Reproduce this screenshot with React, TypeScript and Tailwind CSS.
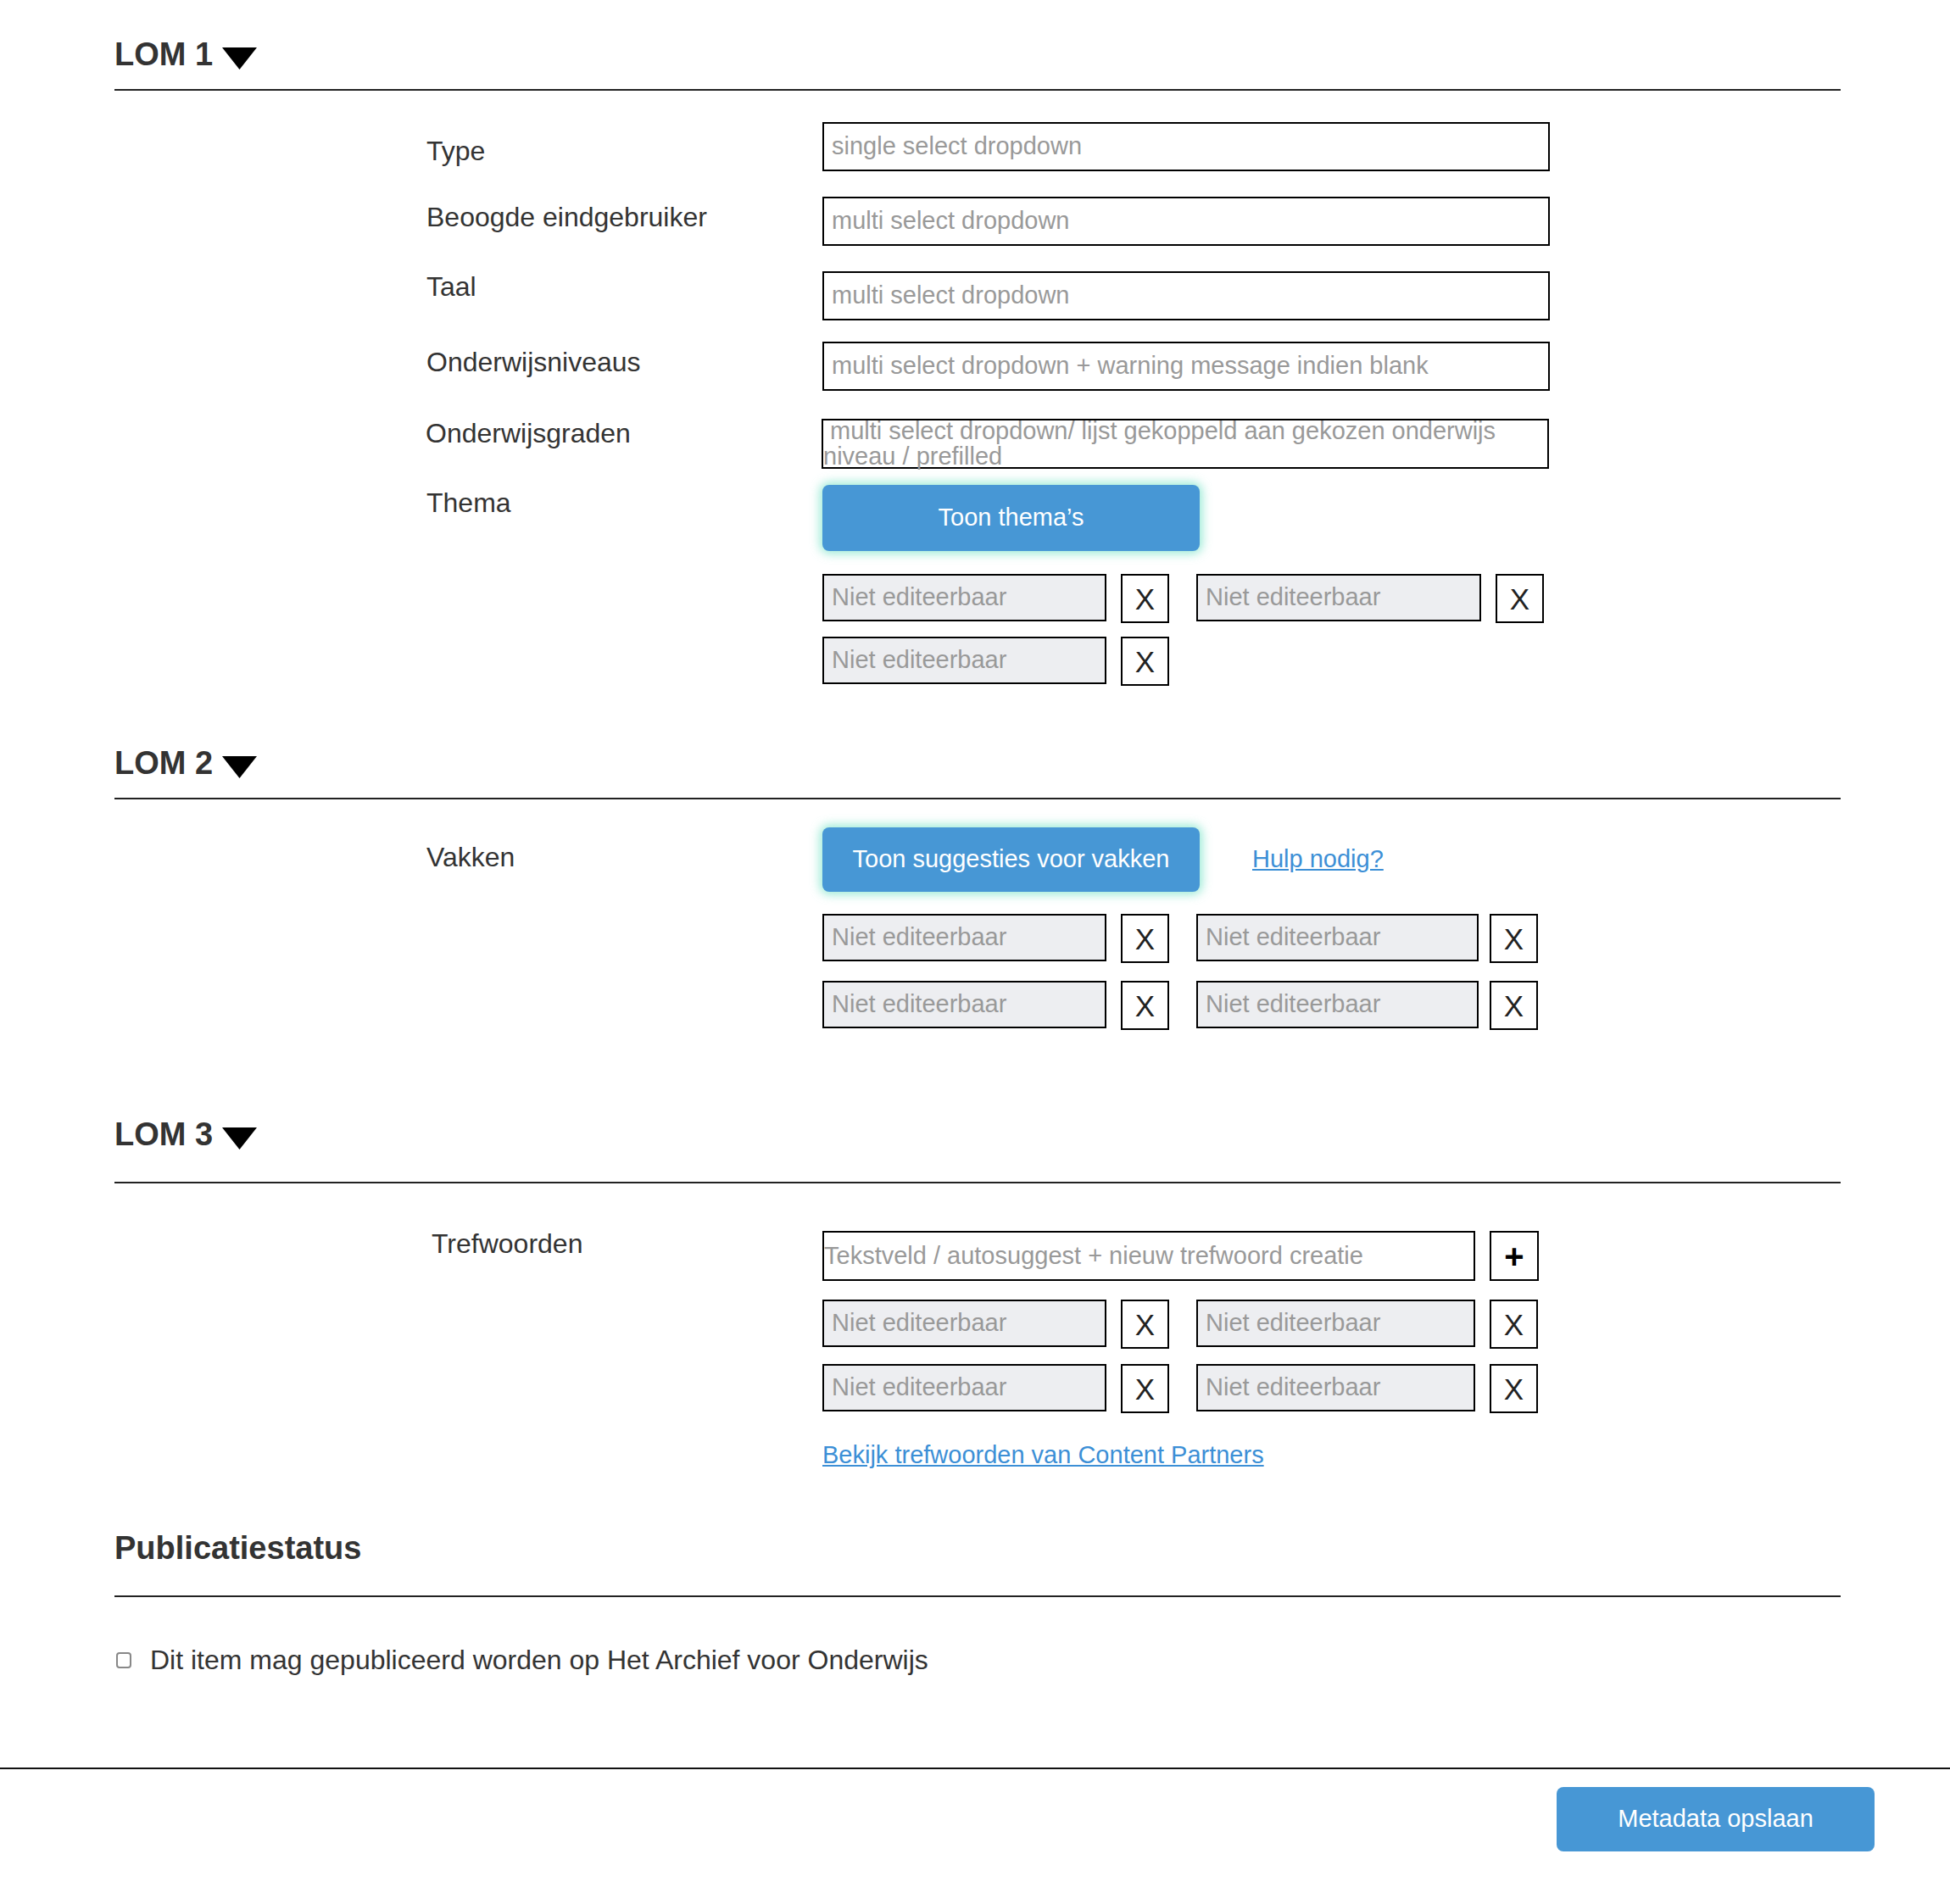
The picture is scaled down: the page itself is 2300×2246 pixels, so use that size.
import React from "react";

const font = { fontFamily: '"Liberation Sans", Arial, sans-serif' };

function Caret() {
  return (
    <svg width="41" height="26" viewBox="0 0 41 26" className="ml-[11px] mt-[17px] shrink-0">
      <polygon points="0,0 41,0 20.5,26" fill="#000" />
    </svg>
  );
}

function SectionHeader({ title, caret = true, pb = "pb-[16px]" }: { title: string; caret?: boolean; pb?: string }) {
  return (
    <div className={`flex items-start border-b-2 border-[#222] ${pb}`}>
      <h2 className="h-[50px] text-[38px] leading-[50px] font-bold text-[#333]">{title}</h2>
      {caret && <Caret />}
    </div>
  );
}

function Field({ text }: { text: string }) {
  return (
    <div className="flex h-[58px] w-[858px] items-center border-2 border-black bg-white px-[9px] text-[29px] text-[#999]">
      {text}
    </div>
  );
}

function Chip({ w = "w-[335px]", gap = "ml-[17px]" }: { w?: string; gap?: string }) {
  return (
    <div className="flex items-start">
      <div className={`flex h-[56px] ${w} items-center border-2 border-black bg-[#edeef1] pl-[9px] text-[29px] text-[#999]`}>
        Niet editeerbaar
      </div>
      <div className={`${gap} flex h-[58px] w-[57px] items-center justify-center border-2 border-black bg-white text-[35px] leading-none text-[#222]`}>
        X
      </div>
    </div>
  );
}

function BlueButton({ children, h = "h-[78px]" }: { children: React.ReactNode; h?: string }) {
  return (
    <button className={`${h} w-[445px] rounded-[8px] bg-[#4797d5] text-[29px] text-white shadow-[0_0_12px_3px_rgba(110,225,195,0.7)]`}>
      {children}
    </button>
  );
}

export default function App() {
  return (
    <div style={font} className="min-h-[2246px] w-full bg-white text-[#333]">
      <div className="pl-[135px] pr-[129px]">
        {/* LOM 1 */}
        <div className="pt-[39px]">
          <SectionHeader title="LOM 1" />
        </div>

        <div className="pl-[368px]">
          <div className="mt-[37px] flex">
            <div className="w-[467px] shrink-0 pt-[14px] text-[32px] leading-[40px]">Type</div>
            <Field text="single select dropdown" />
          </div>
          <div className="mt-[30px] flex">
            <div className="w-[467px] shrink-0 pt-[4px] text-[32px] leading-[40px]">Beoogde eindgebruiker</div>
            <Field text="multi select dropdown" />
          </div>
          <div className="mt-[30px] flex">
            <div className="w-[467px] shrink-0 -mt-[2px] text-[32px] leading-[40px]">Taal</div>
            <Field text="multi select dropdown" />
          </div>
          <div className="mt-[25px] flex">
            <div className="w-[467px] shrink-0 pt-[4px] text-[32px] leading-[40px]">Onderwijsniveaus</div>
            <Field text="multi select dropdown + warning message indien blank" />
          </div>
          <div className="mt-[33px] flex">
            <div className="w-[467px] shrink-0 -mt-[3px] -ml-[1px] text-[32px] leading-[40px]">Onderwijsgraden</div>
            <div className="h-[59px] w-[858px] border-2 border-black bg-white indent-[8px] text-[29px] leading-[30px] text-[#999]">
              <div className="-mt-[3px]">multi select dropdown/ lijst gekoppeld aan gekozen onderwijs niveau / prefilled</div>
            </div>
          </div>
          <div className="mt-[19px] flex">
            <div className="w-[467px] shrink-0 pt-[1px] text-[32px] leading-[40px]">Thema</div>
            <div>
              <BlueButton>Toon thema’s</BlueButton>
              <div className="mt-[27px] flex flex-col gap-[16px]">
                <div className="flex gap-[32px]">
                  <Chip />
                  <Chip w="w-[336px]" />
                </div>
                <div className="flex gap-[32px]">
                  <Chip />
                </div>
              </div>
            </div>
          </div>
        </div>

        {/* LOM 2 */}
        <div className="mt-[66px]">
          <SectionHeader title="LOM 2" />
        </div>

        <div className="pl-[368px]">
          <div className="mt-[33px] flex">
            <div className="w-[467px] shrink-0 pt-[15px] text-[32px] leading-[40px]">Vakken</div>
            <div>
              <div className="flex items-center">
                <BlueButton h="h-[76px]">Toon suggesties voor vakken</BlueButton>
                <a href="#" className="ml-[62px] text-[29px] text-[#3c8fd6] underline">
                  Hulp nodig?
                </a>
              </div>
              <div className="mt-[26px] flex flex-col gap-[21px]">
                <div className="flex gap-[32px]">
                  <Chip />
                  <Chip w="w-[333px]" gap="ml-[13px]" />
                </div>
                <div className="flex gap-[32px]">
                  <Chip />
                  <Chip w="w-[333px]" gap="ml-[13px]" />
                </div>
              </div>
            </div>
          </div>
        </div>

        {/* LOM 3 */}
        <div className="mt-[98px]">
          <SectionHeader title="LOM 3" pb="pb-[31px]" />
        </div>

        <div className="pl-[368px]">
          <div className="mt-[56px] flex">
            <div className="w-[467px] shrink-0 -mt-[5px] pl-[6px] text-[32px] leading-[40px]">Trefwoorden</div>
            <div>
              <div className="flex items-start">
                <div className="flex h-[59px] w-[770px] items-center border-2 border-black bg-white text-[29px] text-[#999]">
                  Tekstveld / autosuggest + nieuw trefwoord creatie
                </div>
                <button className="ml-[17px] flex h-[59px] w-[58px] items-center justify-center border-2 border-black bg-white text-[40px] font-bold leading-none text-black">
                  +
                </button>
              </div>
              <div className="mt-[22px] flex flex-col gap-[18px]">
                <div className="flex gap-[32px]">
                  <Chip />
                  <Chip w="w-[329px]" />
                </div>
                <div className="flex gap-[32px]">
                  <Chip />
                  <Chip w="w-[329px]" />
                </div>
              </div>
              <a href="#" className="mt-[31px] block text-[29px] leading-[36px] text-[#3c8fd6] underline">
                Bekijk trefwoorden van Content Partners
              </a>
            </div>
          </div>
        </div>

        {/* Publicatiestatus */}
        <div className="mt-[67px]">
          <SectionHeader title="Publicatiestatus" caret={false} pb="pb-[31px]" />
        </div>

        <label className="mt-[54px] flex items-center text-[32px] leading-[40px] text-[#333]">
          <input
            type="checkbox"
            className="ml-[2px] h-[19px] w-[18px] appearance-none rounded-[4px] border-2 border-[#888] bg-white"
          />
          <span className="ml-[22px]">Dit item mag gepubliceerd worden op Het Archief voor Onderwijs</span>
        </label>
      </div>

      {/* Footer */}
      <div className="mt-[107px] border-t-2 border-[#111]">
        <div className="flex justify-end pr-[89px] pt-[21px] pb-[62px]">
          <button className="h-[76px] w-[375px] rounded-[8px] bg-[#4797d5] text-[29px] text-white">
            Metadata opslaan
          </button>
        </div>
      </div>
    </div>
  );
}
